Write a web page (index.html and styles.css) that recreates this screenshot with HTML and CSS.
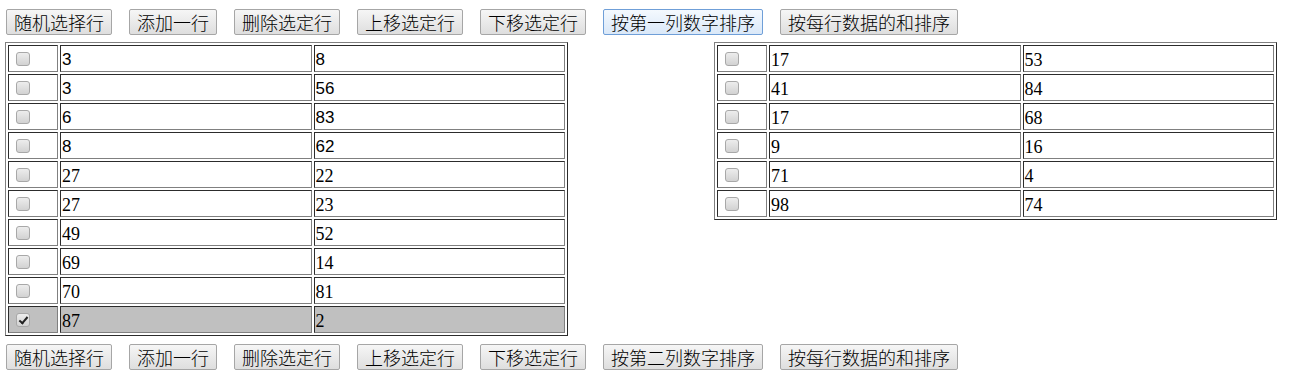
FILE: index.html
```html
<!DOCTYPE html>
<html lang="zh-CN">
<head>
    <meta charset="UTF-8">
    <title>表格排序</title>
    <link rel="stylesheet" href="styles.css">
</head>
<body>

    <!-- 上面的按钮 -->
    <div class="toolbar">
        <button class="btn">随机选择行</button>
        <button class="btn">添加一行</button>
        <button class="btn">删除选定行</button>
        <button class="btn">上移选定行</button>
        <button class="btn">下移选定行</button>
        <button class="btn hover">按第一列数字排序</button>
        <button class="btn">按每行数据的和排序</button>
    </div>

    <!-- 两个表格 -->
    <div class="tables">
        <table class="data-table">
            <colgroup><col class="c-check"><col><col></colgroup>
            <tr class="sans"><td><input type="checkbox"></td><td>3</td><td>8</td></tr>
            <tr class="sans"><td><input type="checkbox"></td><td>3</td><td>56</td></tr>
            <tr class="sans"><td><input type="checkbox"></td><td>6</td><td>83</td></tr>
            <tr class="sans"><td><input type="checkbox"></td><td>8</td><td>62</td></tr>
            <tr><td><input type="checkbox"></td><td>27</td><td>22</td></tr>
            <tr><td><input type="checkbox"></td><td>27</td><td>23</td></tr>
            <tr><td><input type="checkbox"></td><td>49</td><td>52</td></tr>
            <tr><td><input type="checkbox"></td><td>69</td><td>14</td></tr>
            <tr><td><input type="checkbox"></td><td>70</td><td>81</td></tr>
            <tr class="selected"><td><input type="checkbox" checked></td><td>87</td><td>2</td></tr>
        </table>

        <table class="data-table right">
            <colgroup><col class="c-check"><col><col></colgroup>
            <tr><td><input type="checkbox"></td><td>17</td><td>53</td></tr>
            <tr><td><input type="checkbox"></td><td>41</td><td>84</td></tr>
            <tr><td><input type="checkbox"></td><td>17</td><td>68</td></tr>
            <tr><td><input type="checkbox"></td><td>9</td><td>16</td></tr>
            <tr><td><input type="checkbox"></td><td>71</td><td>4</td></tr>
            <tr><td><input type="checkbox"></td><td>98</td><td>74</td></tr>
        </table>
    </div>

    <!-- 下面的按钮 -->
    <div class="toolbar bottom">
        <button class="btn">随机选择行</button>
        <button class="btn">添加一行</button>
        <button class="btn">删除选定行</button>
        <button class="btn">上移选定行</button>
        <button class="btn">下移选定行</button>
        <button class="btn">按第二列数字排序</button>
        <button class="btn">按每行数据的和排序</button>
    </div>

</body>
</html>
```

FILE: styles.css
```css
/* 基本 */
body {
    margin: 0;
    padding: 0;
    background: #fff;
    font-family: "Liberation Serif", "Noto Sans CJK SC", serif;
    font-size: 18px;
    color: #000;
}

/* 按钮行 */
.toolbar {
    display: flex;
    gap: 17px;
    padding: 9px 0 0 6px;
}
.toolbar.bottom {
    padding-top: 8px;
}

.btn {
    font-family: "Noto Sans CJK SC", "Noto Sans", sans-serif;
    font-size: 18px;
    font-weight: 300;
    line-height: 20px;
    height: 26px;
    padding: 0 7px;
    margin: 0;
    color: #000;
    border: 1px solid #a6a6a6;
    border-radius: 2px;
    background: linear-gradient(#f6f6f6, #dedede);
    cursor: pointer;
}
.btn.hover {
    border-color: #6f9fd8;
    background: linear-gradient(#f4f9fe, #dae8f8);
}

/* 表格 */
.tables {
    display: flex;
    align-items: flex-start;
    gap: 146px;
    padding: 7px 0 0 5px;
}

.data-table {
    width: 563px;
    table-layout: fixed;
    border: 1px outset #808080;
    border-spacing: 2px;
}
.data-table .c-check {
    width: 50px;
}
.data-table td {
    height: 25px;
    line-height: 20px;
    padding: 3px 1px 0;
    box-sizing: border-box;
    border: 1px inset #808080;
    vertical-align: middle;
}
.data-table tr {
    height: 27px;
}
.data-table tr.sans td {
    font-family: "Liberation Sans", Arial, sans-serif;
    font-size: 17px;
}
.data-table tr.selected td {
    background-color: #c0c0c0;
}

/* 复选框 */
.data-table input[type="checkbox"] {
    -webkit-appearance: none;
    appearance: none;
    display: block;
    position: relative;
    width: 14px;
    height: 14px;
    margin: -3px 0 0 6px;
    border: 1px solid #a8a8a8;
    border-radius: 3px;
    background: linear-gradient(#ededed, #d2d2d2);
    box-sizing: border-box;
}
.data-table input[type="checkbox"]:checked::after {
    content: "";
    position: absolute;
    left: 4px;
    top: 1px;
    width: 3px;
    height: 7px;
    border: solid #222;
    border-width: 0 2px 2px 0;
    transform: rotate(40deg);
}
```
